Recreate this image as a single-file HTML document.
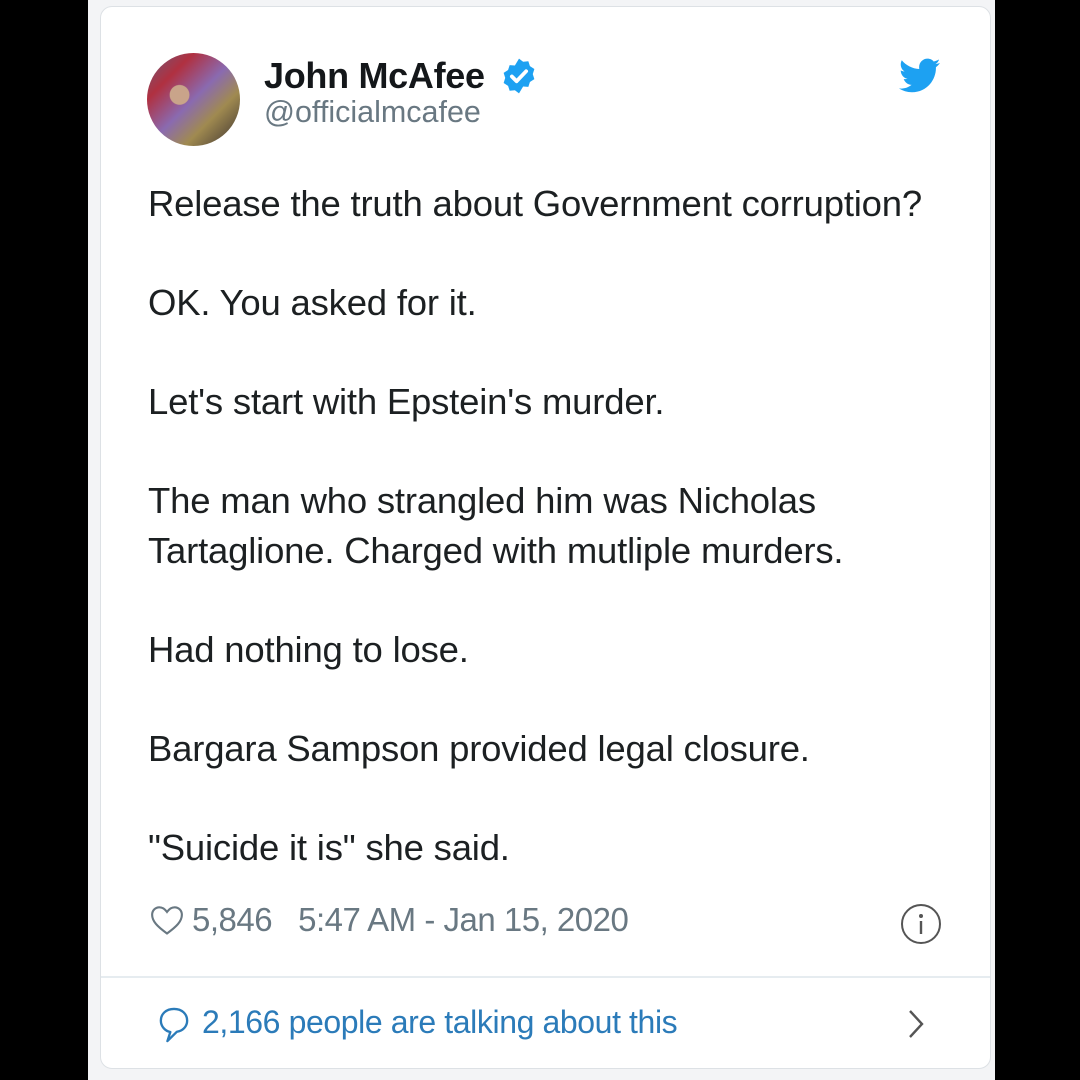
<!DOCTYPE html>
<html><head><meta charset="utf-8"><style>
html,body{margin:0;padding:0}
body{width:1080px;height:1080px;background:#000;position:relative;overflow:hidden;font-family:"Liberation Sans",sans-serif}
.bg{position:absolute;left:88px;top:0;width:907px;height:1080px;background:#f3f4f6}
.card{position:absolute;left:100px;top:6px;width:889px;height:1061px;background:#fff;border:1px solid #dde1e5;border-radius:12px}
.t{position:absolute;left:148px;font-size:36.5px;color:#1c2022;white-space:nowrap;letter-spacing:-0.2px;line-height:40px}
.av{position:absolute;left:147px;top:53px;width:93px;height:93px;border-radius:50%;background:radial-gradient(circle at 35% 45%,#c9a48a 0 12%,transparent 13%),linear-gradient(135deg,#6b5a7a 0%,#b03040 25%,#8a6ab0 50%,#a08a50 70%,#3a3030 100%)}
</style></head><body>
<div class="bg"></div>
<div class="card"></div>
<div class="av"></div>
<div style="position:absolute;left:264px;top:55px;font-size:36px;font-weight:bold;color:#14171a;letter-spacing:-0.3px">John McAfee</div>
<svg style="position:absolute;left:500px;top:57px" width="38" height="38" viewBox="0 0 24 24"><path fill="#1da1f2" d="M12 1l2.6 2 3.3-.3 1 3.1 2.8 1.8-1 3.2 1 3.2-2.8 1.8-1 3.1-3.3-.3L12 23l-2.6-2-3.3.3-1-3.1-2.8-1.8 1-3.2-1-3.2 2.8-1.8 1-3.1 3.3.3z"/><path d="M7.5 12.3l3 3 6-6.3" stroke="#fff" stroke-width="2.4" fill="none" stroke-linecap="round" stroke-linejoin="round"/></svg>
<div style="position:absolute;left:264px;top:95px;font-size:30.5px;color:#697882">@officialmcafee</div>
<svg style="position:absolute;left:899px;top:58px" width="42" height="36" viewBox="0 0 24 20"><path fill="#1da1f2" d="M23.6 2.4c-.9.4-1.8.6-2.8.8 1-.6 1.8-1.5 2.1-2.7-.9.6-2 1-3.1 1.2C19 .7 17.7.1 16.3.1c-2.7 0-4.8 2.2-4.8 4.8 0 .4 0 .8.1 1.1C7.5 5.8 4 3.9 1.6 1 1.2 1.7 1 2.5 1 3.4c0 1.7.9 3.2 2.2 4-.8 0-1.5-.2-2.2-.6v.1c0 2.3 1.7 4.3 3.9 4.7-.4.1-.8.2-1.3.2-.3 0-.6 0-.9-.1.6 1.900 2.4 3.3 4.5 3.4-1.7 1.3-3.7 2.1-6 2.1-.4 0-.8 0-1.2-.1 2.1 1.4 4.7 2.2 7.4 2.2 8.9 0 13.7-7.4 13.700-13.7v-.6c.9-.7 1.7-1.5 2.3-2.5z"/></svg>
<div class="t" style="top:184px">Release the truth about Government corruption?</div>
<div class="t" style="top:283px">OK. You asked for it.</div>
<div class="t" style="top:382px">Let's start with Epstein's murder.</div>
<div class="t" style="top:481px">The man who strangled him was Nicholas</div>
<div class="t" style="top:531px">Tartaglione. Charged with mutliple murders.</div>
<div class="t" style="top:630px">Had nothing to lose.</div>
<div class="t" style="top:729px">Bargara Sampson provided legal closure.</div>
<div class="t" style="top:828px">"Suicide it is" she said.</div>
<svg style="position:absolute;left:150px;top:904px" width="34" height="32" viewBox="0 0 24 22"><path d="M12 20.5C5 15.5 1.5 11.8 1.5 7.3 1.5 4.2 3.8 2 6.6 2c2.2 0 4 1.3 5.4 3.3C13.4 3.3 15.2 2 17.4 2c2.8 0 5.1 2.2 5.1 5.3 0 4.5-3.5 8.2-10.5 13.2z" fill="none" stroke="#697882" stroke-width="1.5"/></svg>
<div style="position:absolute;left:192px;top:901px;font-size:33px;color:#697882;white-space:nowrap;letter-spacing:-0.5px">5,846&nbsp;&nbsp;&nbsp;5:47 AM - Jan 15, 2020</div>
<svg style="position:absolute;left:900px;top:903px" width="42" height="42" viewBox="0 0 42 42"><circle cx="21" cy="21" r="19" fill="none" stroke="#555" stroke-width="2"/><circle cx="21" cy="13" r="2" fill="#555"/><path d="M21 18v13" stroke="#555" stroke-width="2.4"/></svg>
<div style="position:absolute;left:101px;top:976px;width:889px;height:2px;background:#e6ecf0"></div>
<svg style="position:absolute;left:156px;top:1006px" width="36" height="38" viewBox="0 0 24 26"><path d="M12 2C6.5 2 3 5.5 3 10c0 4 3 7.2 6.5 7.8L7.5 24 14 17.6C18 17 21 14 21 10c0-4.5-3.5-8-9-8z" fill="none" stroke="#2b7bb9" stroke-width="1.6" stroke-linejoin="round"/></svg>
<div style="position:absolute;left:202px;top:1004px;font-size:32px;color:#2b7bb9;white-space:nowrap;letter-spacing:-0.4px">2,166 people are talking about this</div>
<svg style="position:absolute;left:904px;top:1008px" width="24" height="32" viewBox="0 0 24 32"><path d="M6 3l12 13L6 29" fill="none" stroke="#555" stroke-width="2.4"/></svg>
</body></html>
